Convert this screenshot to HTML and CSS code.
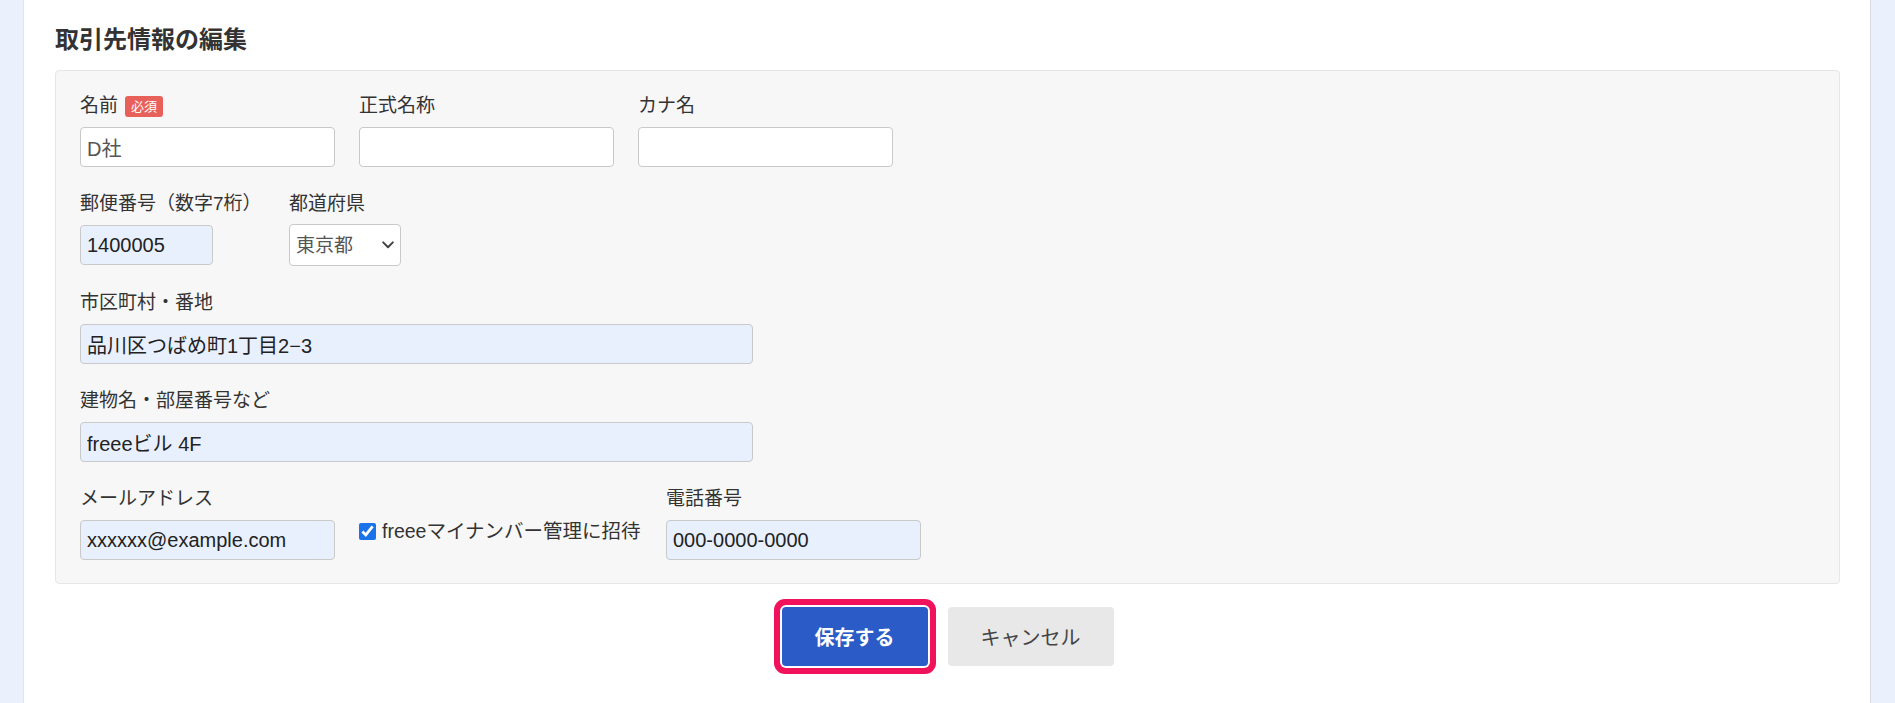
FILE: index.html
```html
<!DOCTYPE html>
<html lang="ja">
<head>
<meta charset="utf-8">
<title>取引先情報の編集</title>
<link rel="stylesheet" href="styles.css">
</head>
<body>
<div class="page">
  <div class="side side-left"></div>
  <main class="main">
    <h2 class="title">取引先情報の編集</h2>
    <form class="panel">
      <div class="row">
        <div class="field">
          <label class="label">名前<span class="badge">必須</span></label>
          <input class="input w-md plain" type="text" value="D社">
        </div>
        <div class="field">
          <label class="label">正式名称</label>
          <input class="input w-md" type="text" value="">
        </div>
        <div class="field">
          <label class="label">カナ名</label>
          <input class="input w-md" type="text" value="">
        </div>
      </div>
      <div class="row">
        <div class="field field-postal">
          <label class="label">郵便番号（数字7桁）</label>
          <input class="input w-sm filled" type="text" value="1400005">
        </div>
        <div class="field">
          <label class="label">都道府県</label>
          <div class="select-wrap">
            <select class="select"><option>東京都</option></select>
            <svg class="chevron" width="12" height="8" viewBox="0 0 12 8"><path d="M1.2 1.4 L6 6.2 L10.8 1.4" fill="none" stroke="#444" stroke-width="2" stroke-linecap="round" stroke-linejoin="round"/></svg>
          </div>
        </div>
      </div>
      <div class="row">
        <div class="field">
          <label class="label">市区町村・番地</label>
          <input class="input w-lg filled" type="text" value="品川区つばめ町1丁目2−3">
        </div>
      </div>
      <div class="row">
        <div class="field">
          <label class="label">建物名・部屋番号など</label>
          <input class="input w-lg filled" type="text" value="freeeビル 4F">
        </div>
      </div>
      <div class="row">
        <div class="field">
          <label class="label">メールアドレス</label>
          <input class="input w-md filled" type="text" value="xxxxxx@example.com">
        </div>
        <label class="check">
          <input class="checkbox" type="checkbox" checked>
          <span>freeeマイナンバー管理に招待</span>
        </label>
        <div class="field">
          <label class="label">電話番号</label>
          <input class="input w-md filled" type="text" value="000-0000-0000">
        </div>
      </div>
    </form>
    <div class="actions">
      <button class="btn btn-primary" type="button">保存する</button>
      <button class="btn btn-secondary" type="button">キャンセル</button>
    </div>
  </main>
  <div class="side side-right"></div>
</div>
</body>
</html>
```
FILE: styles.css
```css
* { box-sizing: border-box; }
html, body { margin: 0; padding: 0; }
body {
  font-family: "Liberation Sans", "Noto Sans CJK JP", sans-serif;
  color: #333;
  background: #fff;
}
.page {
  display: flex;
  width: 1895px;
  height: 703px;
  overflow: hidden;
}
.side {
  background: #eaf1fc;
  flex: none;
}
.side-left {
  width: 24px;
  border-right: 1px solid #e2e6ec;
}
.side-right {
  width: 25px;
  border-left: 1px solid #d9dbe0;
}
.main {
  flex: 1;
  padding: 0 30px 0 31px;
  background: #fff;
}
.title {
  margin: 24px 0 14px;
  font-size: 24px;
  line-height: 32px;
  font-weight: bold;
  color: #333;
}
.panel {
  background: #f7f7f7;
  border: 1px solid #e6e6e6;
  border-radius: 4px;
  padding: 22px 24px 23px;
  display: flex;
  flex-direction: column;
  gap: 24px;
}
.row {
  display: flex;
  gap: 24px;
  align-items: flex-start;
}
.field {
  display: flex;
  flex-direction: column;
}
.field-postal {
  width: 185px;
}
.label {
  font-size: 19px;
  line-height: 26px;
  color: #333;
  margin-bottom: 8px;
  display: flex;
  align-items: center;
  white-space: nowrap;
}
.badge {
  display: inline-block;
  margin-left: 7px;
  background: #e8605a;
  color: #fff;
  font-size: 13px;
  line-height: 21px;
  height: 21px;
  padding: 0 6px;
  border-radius: 3px;
}
.input {
  height: 40px;
  border: 1px solid #c9c9c9;
  border-radius: 4px;
  background: #fff;
  padding: 0 6px;
  font-family: "Liberation Sans", "Noto Sans CJK JP", sans-serif;
  font-size: 20px;
  color: #222;
  outline: none;
}
.input.plain { color: #555; }
.input.filled { background: #e8f0fe; }
.w-sm { width: 133px; }
.w-md { width: 255px; }
.w-lg { width: 673px; }
.select-wrap {
  position: relative;
  width: 112px;
  height: 42px;
  margin-top: -1px;
}
.select {
  appearance: none;
  -webkit-appearance: none;
  width: 100%;
  height: 100%;
  border: 1px solid #c9c9c9;
  border-radius: 4px;
  background: #fff;
  padding: 0 6px;
  font-family: "Liberation Sans", "Noto Sans CJK JP", sans-serif;
  font-size: 19px;
  color: #555;
  outline: none;
}
.chevron {
  position: absolute;
  right: 7px;
  top: 17px;
  pointer-events: none;
}
.check {
  display: flex;
  align-items: center;
  gap: 6px;
  width: 283px;
  padding-top: 32px;
  font-size: 19.5px;
  line-height: 26px;
  color: #333;
  white-space: nowrap;
}
.checkbox {
  width: 17px;
  height: 17px;
  margin: 0;
  flex: none;
  accent-color: #1a73e8;
}
.actions {
  display: flex;
  justify-content: center;
  gap: 20px;
  margin-top: 23px;
}
.btn {
  height: 59px;
  padding: 0 30px;
  border: none;
  border-radius: 4px;
  font-family: "Liberation Sans", "Noto Sans CJK JP", sans-serif;
  font-size: 20px;
  cursor: pointer;
}
.btn-primary {
  width: 146px;
  background: #2a5bc6;
  color: #fff;
  font-weight: bold;
  box-shadow: 0 0 0 2px #fff, 0 0 0 8px #f0125a;
}
.btn-secondary {
  width: 166px;
  background: #e8e8e8;
  color: #444;
}
```
